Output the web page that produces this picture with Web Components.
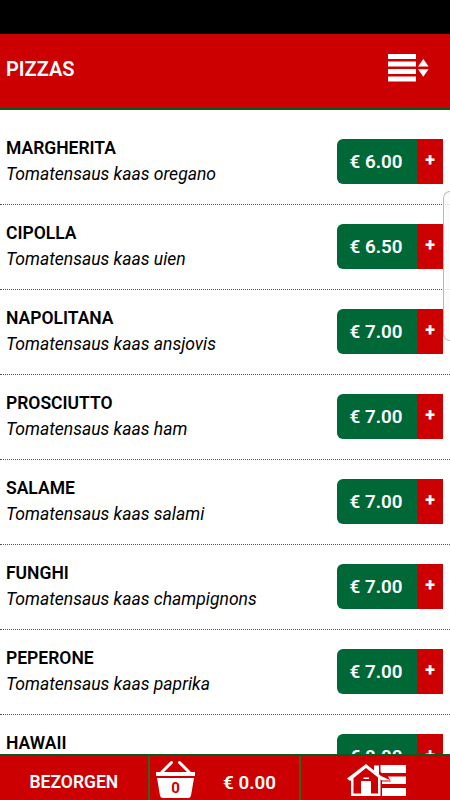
<!DOCTYPE html>
<html lang="nl">
<head>
<meta charset="utf-8">
<title>Pizzas</title>
<style>
  html,body{margin:0;height:100%;overflow:hidden}
  body{font-family:Roboto,"Liberation Sans",sans-serif;background:#fff;color:#000;--red:#cc0000;--green:#006837}
</style>
</head>
<body>
<pizza-app></pizza-app>

<script>
class MenuHeader extends HTMLElement {
  constructor(){
    super();
    const s = this.attachShadow({mode:'open'});
    s.innerHTML = `
      <style>
        :host{display:flex;flex:none;box-sizing:border-box;height:76px;padding:0 21px 6px 6px;align-items:center;justify-content:space-between;background:var(--red);border-bottom:2px solid #0a5a20;color:#fff}
        h1{margin:1px 0 0;font-size:20px;line-height:24px;font-weight:600}
        svg{display:block}
      </style>
      <h1><slot></slot></h1>
      <svg width="42" height="28" viewBox="0 0 42 28" fill="#fff">
        <path d="M1 0h28v5H1zM1 7.500h28v5H1zM1 15h28v5H1zM1 22.500h28v5H1z"/>
        <path d="M31 12.400L36.300 5l5.300 7.400zM31 15.300h10.600L36.300 22.700z"/>
      </svg>
    `;
  }
}

class PriceButton extends HTMLElement {
  constructor(){
    super();
    const s = this.attachShadow({mode:'open'});
    s.innerHTML = `
      <style>
        :host{display:flex;flex:none;width:106px;height:45px;border-radius:6px 0 0 6px;overflow:hidden;color:#fff;font-weight:600}
        .price{width:80px;background:var(--green);font-size:18.8px;line-height:46px;text-align:center;white-space:nowrap;text-indent:-2px}
        .add{flex:1;background:var(--red);font-size:18px;line-height:42px;text-align:center;font-weight:800}
      </style>
      <div class="price"><slot></slot></div>
      <div class="add">+</div>
    `;
  }
}

class MenuItem extends HTMLElement {
  constructor(){
    super();
    const s = this.attachShadow({mode:'open'});
    s.innerHTML = `
      <style>
        :host{display:flex;flex:none;box-sizing:border-box;height:85px;padding:19px 7px 0 6px;justify-content:space-between;align-items:flex-start;border-bottom:1px dotted #555}
        .name{margin-top:-4px;font-size:17.5px;line-height:26px;font-weight:600}
        .desc{font-size:17.55px;line-height:27px;font-style:italic}
      </style>
      <div>
        <div class="name"><slot name="name"></slot></div>
        <div class="desc"><slot name="desc"></slot></div>
      </div>
      <price-button><slot name="price"></slot></price-button>
    `;
  }
}

class OrderBar extends HTMLElement {
  constructor(){
    super();
    const s = this.attachShadow({mode:'open'});
    s.innerHTML = `
      <style>
        :host{display:grid;flex:none;grid-template-columns:148px 149px 149px;column-gap:2px;box-sizing:border-box;height:46px;border-top:2px solid #0a5a20;background:#395f20;color:#fff;font-weight:600;overflow:hidden}
        div{display:flex;background:var(--red);align-items:center}
        /* last column runs to the screen edge */
        :host{grid-template-columns:148px 149px 1fr}
        .mode{font-size:17.5px;padding:8px 0 0 29.5px}
        .cart{align-items:flex-start;padding:4px 0 0 5px;box-sizing:border-box}
        .total{font-size:18.8px;line-height:24px;margin:11px 0 0 27px}
        .home{align-items:flex-start;padding:7px 0 0 45px}
        svg{display:block;flex:none}
        text{font:700 15px Roboto,"Liberation Sans",sans-serif}
      </style>
      <div class="mode"><slot name="mode"></slot></div>
      <div class="cart">
        <svg width="41" height="39" viewBox="0 0 41 39">
          <path d="M7 12L16.500 2.500M34 12L24.500 2.500" fill="none" stroke="#fff" stroke-width="3" stroke-linecap="round"/>
          <path d="M1 12h39v4H1zM2 18h37l-3 17.500q-.5 2.500-3 2.500H8q-2.500 0-3-2.500z" fill="#fff"/>
          <text x="20.500" y="33" text-anchor="middle" fill="#cc0000">0</text>
        </svg>
        <span class="total"><slot name="total"></slot></span>
      </div>
      <div class="home">
        <svg width="61" height="34" viewBox="0 0 61 34" fill="#fff">
          <path d="M34.500 2H60v8H36l-1.500-1zM42 13.500h18v7.500H36v-2.500h9zM36 25h24v8H36z"/>
          <path d="M4 15.500L20 2.500l15 12V33H5z" fill="#cc0000"/>
          <path d="M28 2.500h5v10l-5-4z"/>
          <path d="M1 15.500L20 1l15 12 10 4.500H36L20 5 4 18zM5 15.500l2.500-2V30.500h7.500V18h10v12.500h7V13.500l2.500 2V33H5z"/>
          <path d="M17.500 14.500h5.500v1.500h-5.500z"/>
        </svg>
      </div>
    `;
  }
}

class PizzaApp extends HTMLElement {
  constructor(){
    super();
    const pizzas = [
      ['MARGHERITA','Tomatensaus kaas oregano','6.00'],
      ['CIPOLLA','Tomatensaus kaas uien','6.50'],
      ['NAPOLITANA','Tomatensaus kaas ansjovis','7.00'],
      ['PROSCIUTTO','Tomatensaus kaas ham','7.00'],
      ['SALAME','Tomatensaus kaas salami','7.00'],
      ['FUNGHI','Tomatensaus kaas champignons','7.00'],
      ['PEPERONE','Tomatensaus kaas paprika','7.00'],
      ['HAWAII','','8.00']
    ];
    const s = this.attachShadow({mode:'open'});
    s.innerHTML = `
      <style>
        :host{display:flex;flex-direction:column;height:800px;position:relative}
        .status{flex:none;height:34px;background:#000}
        main{flex:1;min-height:0;overflow:hidden;padding-top:10px;display:flex;flex-direction:column}
        /* edge handle, hangs over the right side of the list */
        .handle{position:absolute;right:0;top:191px;width:7px;height:150px;box-sizing:border-box;border:1px solid #bbb;border-right:0;border-radius:7px 0 0 7px;background:rgba(250,250,250,.8)}
      </style>
      <div class="status"></div>
      <menu-header>PIZZAS</menu-header>
      <main>${pizzas.map(p => `
        <menu-item>
          <span slot="name">${p[0]}</span>
          <span slot="desc">${p[1]}</span>
          <span slot="price">€ ${p[2]}</span>
        </menu-item>`).join('')}
      </main>
      <order-bar>
        <span slot="mode">BEZORGEN</span>
        <span slot="total">€ 0.00</span>
      </order-bar>
      <div class="handle"></div>
    `;
  }
}

customElements.define('menu-header', MenuHeader);
customElements.define('price-button', PriceButton);
customElements.define('menu-item', MenuItem);
customElements.define('order-bar', OrderBar);
customElements.define('pizza-app', PizzaApp);
</script>
</body>
</html>
